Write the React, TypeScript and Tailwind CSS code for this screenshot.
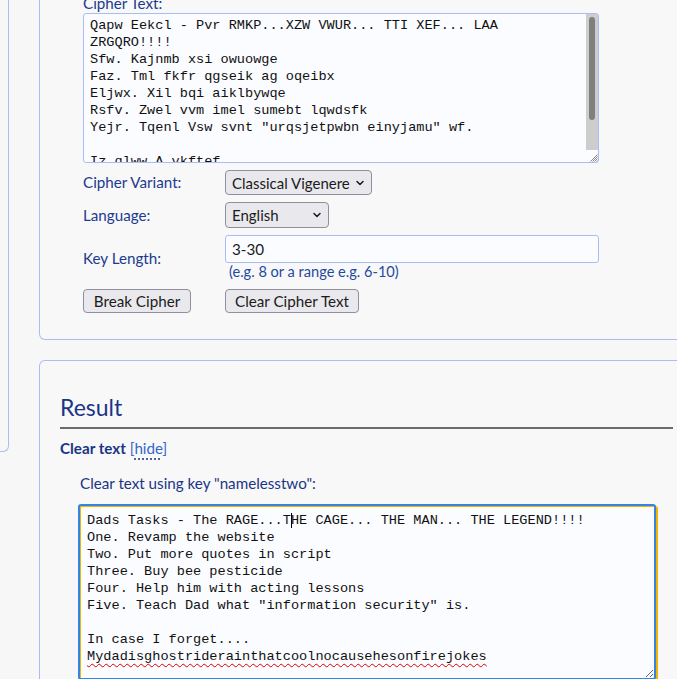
import React from "react";

const cipher = `Qapw Eekcl - Pvr RMKP...XZW VWUR... TTI XEF... LAA ZRGQRO!!!!
Sfw. Kajnmb xsi owuowge
Faz. Tml fkfr qgseik ag oqeibx
Eljwx. Xil bqi aiklbywqe
Rsfv. Zwel vvm imel sumebt lqwdsfk
Yejr. Tqenl Vsw svnt "urqsjetpwbn einyjamu" wf.

Iz qlww A ykftef....
Zlqnqiuusaemfqxgbwoiaaagxhhaolbcmiuwvswhrkrrrkcykmw

`;

const sans = { fontFamily: '"Lato", "Noto Sans", sans-serif' };
const mono = { fontFamily: '"Liberation Mono", "DejaVu Sans Mono", monospace' };

function Chevron() {
  return (
    <svg width="10" height="10" viewBox="0 0 10 10" className="pointer-events-none absolute right-[7px] top-1/2 -translate-y-1/2">
      <path d="M2 3.5 L5 6.5 L8 3.5" fill="none" stroke="#1b1b1b" strokeWidth="1.5" strokeLinecap="round" strokeLinejoin="round" />
    </svg>
  );
}

function Grip() {
  return (
    <svg width="10" height="10" viewBox="0 0 10 10">
      <path d="M9.5 2.5 L2.5 9.5 M9.5 4.5 L4.5 9.5 M9.5 6.5 L6.5 9.5 M9.5 8.5 L8.5 9.5" stroke="#7a7a7a" strokeWidth="0.9" fill="none" />
    </svg>
  );
}

export default function App() {
  return (
    <div className="relative flex h-[679px] w-[677px] overflow-hidden bg-[#f7f7f7]" style={sans}>
      <div className="h-[452px] w-[9px] shrink-0 rounded-br-[6px] border-b border-r border-[#a9bdf4]" />
      <div className="ml-[30px] flex w-[655px] shrink-0 flex-col">
        {/* Top card */}
        <div className="-mt-[7px] rounded-b-[6px] border-x border-b border-[#a9bdf4] bg-[#f8f8f8] pb-[26px] pl-[43px]">
          <div className="h-[20px] text-[15.2px] leading-[20px] text-[#213a8f]">Cipher Text:</div>
          <div className="flex h-[150px] w-[516px] overflow-hidden rounded-[3px] border border-[#a9bdf4] bg-[#fbfcff]">
            <textarea
              readOnly
              defaultValue={cipher}
              className="block h-full min-w-0 flex-1 resize-none overflow-hidden bg-transparent pb-[2px] pl-[6px] pr-[6px] pt-[3px] text-[13.6px] leading-[17px] text-[#111] outline-none"
              style={mono}
            />
            <div className="flex w-[12px] shrink-0 flex-col">
              <div className="flex-1 bg-[#cdcdcd] px-[3px] pt-[3px]">
                <div className="h-[103px] w-[6px] rounded-full bg-[#7f7f7f]" />
              </div>
              <div className="flex h-[12px] items-end justify-end">
                <Grip />
              </div>
            </div>
          </div>
          <div className="mt-[7px] grid grid-cols-[142px_1fr] items-center gap-y-[7px] text-[15.2px] text-[#213a8f]">
            <div>Cipher Variant:</div>
            <div>
              <div className="relative w-[147px]">
                <select className="block h-[25px] w-full appearance-none rounded-[4px] border border-[#8f8f9d] bg-[#e9e9ed] pl-[6px] text-[15px] leading-[20px] text-[#1b1b1b] outline-none" style={sans} defaultValue="cv">
                  <option value="cv">Classical Vigenere</option>
                </select>
                <Chevron />
              </div>
            </div>
            <div>Language:</div>
            <div>
              <div className="relative w-[104px]">
                <select className="block h-[26px] w-full appearance-none rounded-[4px] border border-[#8f8f9d] bg-[#e9e9ed] pl-[6px] text-[15px] leading-[20px] text-[#1b1b1b] outline-none" style={sans} defaultValue="en">
                  <option value="en">English</option>
                </select>
                <Chevron />
              </div>
            </div>
            <div>Key Length:</div>
            <div className="flex flex-col">
              <input
                readOnly
                defaultValue="3-30"
                className="block h-[28px] w-[374px] rounded-[3px] border border-[#a9bdf4] bg-[#fbfcff] px-[6px] text-[15.2px] text-[#1b1b1b] outline-none"
                style={sans}
              />
              <div className="pl-[4px] text-[14.6px] leading-[18px] text-[#1f4aa0]">(e.g. 8 or a range e.g. 6-10)</div>
            </div>
            <div className="mt-[1px]">
              <button className="h-[24px] w-[108px] rounded-[4px] border border-[#8f8f9d] bg-[#e9e9ed] text-[15.2px] leading-[20px] text-[#1b1b1b]" style={sans}>
                Break Cipher
              </button>
            </div>
            <div className="mt-[1px]">
              <button className="h-[24px] w-[134px] rounded-[4px] border border-[#8f8f9d] bg-[#e9e9ed] text-[15.2px] leading-[20px] text-[#1b1b1b]" style={sans}>
                Clear Cipher Text
              </button>
            </div>
          </div>
        </div>

        {/* Result card */}
        <div className="mt-[20px] flex-1 rounded-t-[6px] border-x border-t border-[#a9bdf4] bg-[#f8f8f8] px-[20px] pt-[31px]">
          <h2 className="border-b-2 border-[#6b6b6b] pb-[5px] text-[23px] leading-[30px] text-[#1a3585]">Result</h2>
          <div className="mt-[9px] text-[15.2px] leading-[20px]">
            <span className="font-bold text-[#1a3585]">Clear text</span>{" "}
            <span className="text-[#3366cc]">
              [<span className="underline decoration-dotted decoration-[#1a3585] underline-offset-[5px]">hide</span>]
            </span>
          </div>
          <div className="mt-[15px] pl-[20px] text-[15.2px] leading-[20px] text-[#1a3585]">Clear text using key "namelesstwo":</div>
          <div className="mt-[11px] pl-[18px]">
            <div
              className="h-[176px] w-[578px] resize overflow-hidden whitespace-pre-wrap rounded-[3px] border-2 border-[#3584e4] bg-[#fbfcff] px-[7px] pb-[3px] pt-[6px] text-[13.6px] leading-[17px] text-[#111] shadow-[inset_1px_1px_0_#f2b400,2px_2px_0_#f2b400]"
              style={mono}
            >
              {"Dads Tasks - The RAGE...T"}
              <span className="relative inline-block h-[17px] w-0 align-top">
                <span className="absolute left-0 top-[1px] h-[15px] w-px bg-black" />
              </span>
              {`HE CAGE... THE MAN... THE LEGEND!!!!
One. Revamp the website
Two. Put more quotes in script
Three. Buy bee pesticide
Four. Help him with acting lessons
Five. Teach Dad what "information security" is.

In case I forget....
`}
              <span className="underline decoration-wavy decoration-[#e00000] decoration-1 underline-offset-[3px]">
                Mydadisghostriderainthatcoolnocausehesonfirejokes
              </span>
            </div>
          </div>
        </div>
      </div>
    </div>
  );
}
